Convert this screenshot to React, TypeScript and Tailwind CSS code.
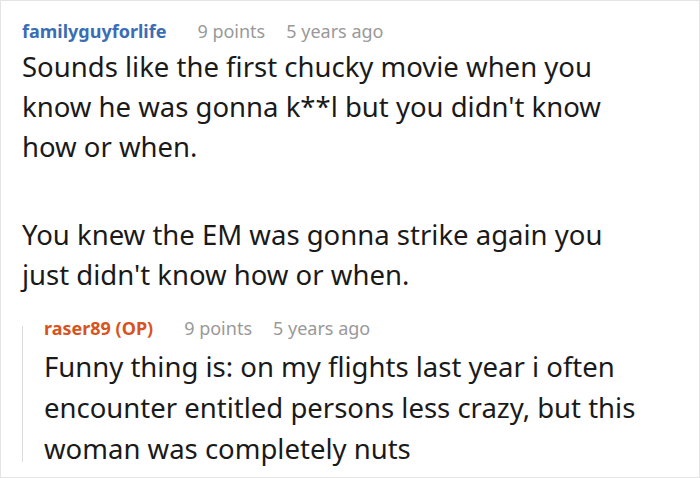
const App = () => {
  return (
    <div
      className="w-[700px] h-[478px] overflow-hidden border border-[#e4e4e4] bg-white text-[#1a1a1a]"
      style={{ fontFamily: '"Noto Sans", "Open Sans", sans-serif' }}
    >
      <div className="pl-[21px] pr-[60px] pt-[16px]">
        <div className="flex items-baseline text-[18px] leading-[28px]">
          <span className="font-bold text-[#3b6db5]">familyguyforlife</span>
          <span className="ml-[31px] text-[#999]">9 points</span>
          <span className="ml-[21px] text-[#999]">5 years ago</span>
        </div>
        <div className="mt-[2px] text-[27.5px] leading-[40px]">
          <p>
            Sounds like the first chucky movie when you know he was gonna k**l
            but you didn't know how or when.
          </p>
          <p className="mt-[48px]">
            You knew the EM was gonna strike again you just didn't know how or
            when.
          </p>
        </div>
        <div className="mt-[19px] flex">
          <div className="mt-[12px] mb-[7px] w-px shrink-0 bg-[#dcdcdc]" />
          <div className="pl-[21px]">
            <div className="flex items-baseline text-[18px] leading-[28px]">
              <span className="font-bold text-[#d9531e]">raser89 (OP)</span>
              <span className="ml-[31px] text-[#999]">9 points</span>
              <span className="ml-[21px] text-[#999]">5 years ago</span>
            </div>
            <p className="mt-[4px] text-[27.5px] leading-[41px]">
              Funny thing is: on my flights last year i often encounter
              entitled persons less crazy, but this woman was completely nuts
            </p>
          </div>
        </div>
      </div>
    </div>
  );
};

export default App;
